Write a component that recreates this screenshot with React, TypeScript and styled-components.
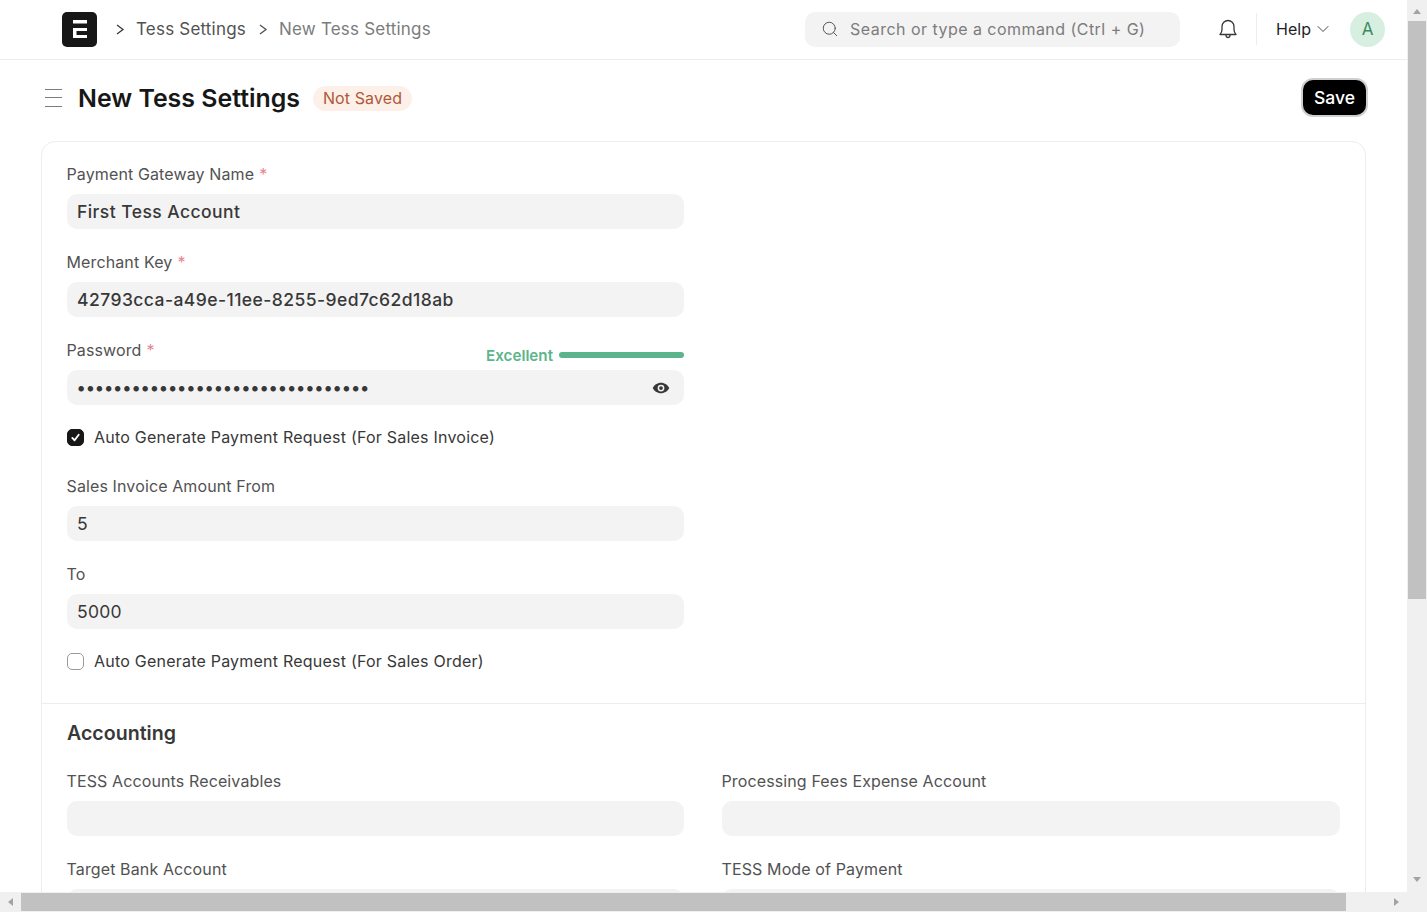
import styled, { createGlobalStyle } from "styled-components";
import { ChevronDown, Search } from "lucide-react";

const Global = createGlobalStyle`
  * { box-sizing: border-box; }
  html, body { margin: 0; height: 100%; overflow: hidden; background: #fff; }
  body { font-family: Inter, "Liberation Sans", sans-serif; color: #383838; }
`;

const Shell = styled.div`
  width: 1427px;
  height: 912px;
  display: grid;
  grid-template-columns: 1407px 20px;
  grid-template-rows: 892px 20px;
  overflow: hidden;
`;

const Viewport = styled.main`
  overflow: hidden;
  background: #fff;
`;

const Navbar = styled.header`
  height: 60px;
  border-bottom: 1px solid #ededed;
  display: flex;
  align-items: center;
  padding: 0 22px 1px 62px;
`;

const Logo = styled.svg`
  width: 35px;
  height: 35px;
  flex: none;
`;

const Crumbs = styled.nav`
  display: flex;
  align-items: center;
  margin-left: 15px;
  flex: 1;
`;

const Crumb = styled.span<{ $current?: boolean }>`
  font-size: 17px;
  letter-spacing: 0.2px;
  color: ${(p) => (p.$current ? "#7c7c7c" : "#525252")};
  margin-left: 9px;
  margin-right: 9px;
`;

const CrumbArrow = styled.svg`
  width: 15px;
  height: 15px;
  flex: none;
`;

const SearchBox = styled.div`
  width: 375px;
  height: 35px;
  border-radius: 10px;
  background: #f3f3f3;
  display: flex;
  align-items: center;
  padding-left: 16px;
  gap: 11px;
  color: #7c7c7c;
  font-size: 16px;
  letter-spacing: 0.46px;
`;

const Bell = styled.svg`
  width: 20px;
  height: 22px;
  margin-left: 38px;
`;

const NavDivider = styled.div`
  width: 1px;
  height: 32px;
  background: #ededed;
  margin: 0 19px 0 18px;
`;

const Help = styled.div`
  display: flex;
  align-items: center;
  gap: 2px;
  font-size: 16px;
  color: #1f1f1f;
`;

const Avatar = styled.div`
  width: 35px;
  height: 35px;
  border-radius: 50%;
  background: #d7efe0;
  color: #3d8a5f;
  font-size: 17px;
  display: flex;
  align-items: center;
  justify-content: center;
  margin-left: 17px;
`;

const PageHead = styled.div`
  height: 81px;
  display: flex;
  align-items: center;
  padding: 0 41px 5px 45px;
`;

const Burger = styled.div`
  width: 17px;
  height: 18px;
  border-top: 1.5px solid #7c7c7c;
  border-bottom: 1.5px solid #7c7c7c;
  flex: none;
  &::after {
    content: "";
    display: block;
    height: 1.5px;
    margin-top: 6.75px;
    background: #7c7c7c;
  }
`;

const Title = styled.h1`
  margin: 0 0 0 16px;
  font-size: 24.9px;
  line-height: 32px;
  font-weight: 600;
  color: #171717;
`;

const Badge = styled.span`
  margin-left: 13px;
  height: 25px;
  padding: 0 10px;
  border-radius: 13px;
  background: #fdf0e8;
  color: #b0583a;
  font-size: 16px;
  letter-spacing: 0.1px;
  display: flex;
  align-items: center;
`;

const SaveButton = styled.button`
  margin: 0 0 2px auto;
  height: 35px;
  width: 63px;
  border: 0;
  border-radius: 10px;
  background: #000;
  color: #fff;
  font: 500 17.5px Inter, sans-serif;
  box-shadow: 0 0 0 2px #cfcfcf;
`;

const Card = styled.section`
  margin-left: 41px;
  width: 1325px;
  border: 1px solid #ededed;
  border-radius: 14px;
`;

const Section = styled.div`
  padding: 22px 25px 0;
  & + & {
    border-top: 1px solid #ededed;
    padding-top: 17px;
  }
`;

const FirstSection = styled(Section)`
  padding-bottom: 32px;
`;

const Column = styled.div`
  width: 617px;
`;

const SectionTitle = styled.h2`
  margin: 0 0 26px;
  height: 24px;
  line-height: 24px;
  font-size: 19.6px;
  font-weight: 600;
  color: #383838;
`;

const Columns = styled.div`
  display: grid;
  grid-template-columns: 617px 618px;
  column-gap: 38px;
`;

const Field = styled.div`
  margin-bottom: 23px;
`;

const LabelRow = styled.div`
  height: 20px;
  margin-bottom: 10px;
  display: flex;
  justify-content: space-between;
`;

const Label = styled.label`
  margin-left: -0.5px;
  font-size: 16px;
  line-height: 20px;
  letter-spacing: 0.12px;
  color: #525252;
`;

const Req = styled.span`
  color: #e8858c;
  margin-left: 5px;
`;

const Strength = styled.div`
  display: flex;
  align-items: center;
  gap: 6px;
  margin-top: 5px;
  height: 20px;
  color: #5cb58a;
  font-size: 15.2px;
  font-weight: 600;
`;

const StrengthBar = styled.div`
  width: 125px;
  height: 6px;
  border-radius: 3px;
  background: #5cb58a;
`;

const Input = styled.div<{ $bold?: boolean }>`
  height: 35px;
  border-radius: 10px;
  background: #f3f3f3;
  display: flex;
  align-items: center;
  justify-content: space-between;
  padding: 0 14px 0 10px;
  font-size: 17.5px;
  letter-spacing: ${(p) => (p.$bold ? "0.44px" : "0.3px")};
  font-weight: ${(p) => (p.$bold ? 500 : 400)};
  color: #383838;
`;

const Dots = styled.span`
  font-size: 17.5px;
  letter-spacing: 0.85px;
  font-weight: 700;
  color: #383838;
`;

const EyeIcon = styled.svg`
  width: 18px;
  height: 18px;
`;

const CheckRow = styled.div<{ $last?: boolean }>`
  display: flex;
  align-items: center;
  gap: 10px;
  height: 20px;
  margin-bottom: ${(p) => (p.$last ? 0 : "29px")};
  font-size: 16px;
  letter-spacing: 0.22px;
  color: #383838;
  margin-top: -1px;
`;

const Check = styled.span<{ $on?: boolean }>`
  width: 17px;
  height: 17px;
  border-radius: 5px;
  flex: none;
  display: flex;
  align-items: center;
  justify-content: center;
  background: ${(p) => (p.$on ? "#171717" : "#fff")};
  border: 1px solid ${(p) => (p.$on ? "#171717" : "#9a9a9a")};
`;

const VTrack = styled.div`
  background: #f0f0f0;
  display: flex;
  flex-direction: column;
  align-items: center;
`;

const HTrack = styled.div`
  background: #f0f0f0;
  display: flex;
  align-items: center;
`;

const Corner = styled.div`
  background: #f0f0f0;
`;

const VThumb = styled.div`
  width: 18px;
  height: 578px;
  background: #c1c1c1;
`;

const HThumb = styled.div`
  width: 1325px;
  height: 18px;
  background: #c1c1c1;
`;

const ArrowV = styled.div<{ $down?: boolean }>`
  width: 0;
  height: 0;
  margin: ${(p) => (p.$down ? "auto 0 10px" : "9px 0 7px")};
  border-left: 4.5px solid transparent;
  border-right: 4.5px solid transparent;
  ${(p) =>
    p.$down ? "border-top: 5px solid #a3a3a3;" : "border-bottom: 5px solid #a3a3a3;"}
`;

const ArrowH = styled.div<{ $right?: boolean }>`
  width: 0;
  height: 0;
  margin: ${(p) => (p.$right ? "0 8px 0 auto" : "0 8px 0 8px")};
  border-top: 4.5px solid transparent;
  border-bottom: 4.5px solid transparent;
  ${(p) =>
    p.$right ? "border-left: 5px solid #a3a3a3;" : "border-right: 5px solid #a3a3a3;"}
`;

const fields = [
  { label: "Sales Invoice Amount From", value: "5" },
  { label: "To", value: "5000" },
];

const Arrow = ({ color }: { color: string }) => (
  <CrumbArrow viewBox="0 0 15 15" fill="none" stroke={color} strokeWidth="1.3">
    <path d="M5 3l6 4.500-6 4.500" />
  </CrumbArrow>
);

export default function App() {
  return (
    <Shell>
      <Global />
      <Viewport>
        <Navbar>
          <Logo viewBox="0 0 35 35">
            <rect width="35" height="35" rx="5" fill="#171717" />
            <path d="M11 8h14v3.500H11zM11 16h14v3H14.500v4H25v3H11z" fill="#fff" />
          </Logo>
          <Crumbs>
            <Arrow color="#383838" />
            <Crumb>Tess Settings</Crumb>
            <Arrow color="#525252" />
            <Crumb $current>New Tess Settings</Crumb>
          </Crumbs>
          <SearchBox>
            <Search size={18} strokeWidth={1.3} color="#525252" />
            Search or type a command (Ctrl + G)
          </SearchBox>
          <Bell viewBox="0 0 20 22" fill="none" stroke="#383838" strokeWidth="1.3">
            <path d="M2 16.500c1.200-1.300 2-2.200 2-5V8.500a6 6 0 0 1 12 0v3c0 2.800.8 3.700 2 5z" strokeLinejoin="round" />
            <path d="M8 17c0 1.500 1 2.500 2 2.500s2-1 2-2.500" />
          </Bell>
          <NavDivider />
          <Help>
            Help
            <ChevronDown size={20} strokeWidth={1.1} color="#383838" />
          </Help>
          <Avatar>A</Avatar>
        </Navbar>
        <PageHead>
          <Burger />
          <Title>New Tess Settings</Title>
          <Badge>Not Saved</Badge>
          <SaveButton>Save</SaveButton>
        </PageHead>
        <Card>
          <FirstSection>
            <Column>
              <Field>
                <LabelRow>
                  <Label>Payment Gateway Name<Req>*</Req></Label>
                </LabelRow>
                <Input $bold>First Tess Account</Input>
              </Field>
              <Field>
                <LabelRow>
                  <Label>Merchant Key<Req>*</Req></Label>
                </LabelRow>
                <Input $bold>42793cca-a49e-11ee-8255-9ed7c62d18ab</Input>
              </Field>
              <Field>
                <LabelRow>
                  <Label>Password<Req>*</Req></Label>
                  <Strength>
                    Excellent
                    <StrengthBar />
                  </Strength>
                </LabelRow>
                <Input>
                  <Dots>••••••••••••••••••••••••••••••••</Dots>
                  <EyeIcon viewBox="0 0 24 24" fill="#383838">
                    <path d="M12 5C7 5 2.700 8.100 1 12c1.700 3.900 6 7 11 7s9.300-3.100 11-7c-1.700-3.900-6-7-11-7zm0 11.500a4.500 4.500 0 1 1 0-9 4.500 4.500 0 0 1 0 9zm0-7a2.500 2.500 0 1 0 0 5 2.500 2.500 0 0 0 0-5z" />
                  </EyeIcon>
                </Input>
              </Field>
              <CheckRow>
                <Check $on>
                  <svg width="11" height="11" viewBox="0 0 12 12" fill="none" stroke="#fff" strokeWidth="2" strokeLinecap="round" strokeLinejoin="round">
                    <path d="M2.500 6.500l2.500 2.500 4.500-6" />
                  </svg>
                </Check>
                Auto Generate Payment Request (For Sales Invoice)
              </CheckRow>
              {fields.map((f) => (
                <Field key={f.label}>
                  <LabelRow>
                    <Label>{f.label}</Label>
                  </LabelRow>
                  <Input>{f.value}</Input>
                </Field>
              ))}
              <CheckRow $last>
                <Check />
                Auto Generate Payment Request (For Sales Order)
              </CheckRow>
            </Column>
          </FirstSection>
          <Section>
            <SectionTitle>Accounting</SectionTitle>
            <Columns>
              <Field>
                <LabelRow><Label>TESS Accounts Receivables</Label></LabelRow>
                <Input />
              </Field>
              <Field>
                <LabelRow><Label>Processing Fees Expense Account</Label></LabelRow>
                <Input />
              </Field>
              <Field>
                <LabelRow><Label>Target Bank Account</Label></LabelRow>
                <Input />
              </Field>
              <Field>
                <LabelRow><Label>TESS Mode of Payment</Label></LabelRow>
                <Input />
              </Field>
            </Columns>
          </Section>
        </Card>
      </Viewport>
      <VTrack>
        <ArrowV />
        <VThumb />
        <ArrowV $down />
      </VTrack>
      <HTrack>
        <ArrowH />
        <HThumb />
        <ArrowH $right />
      </HTrack>
      <Corner />
    </Shell>
  );
}
